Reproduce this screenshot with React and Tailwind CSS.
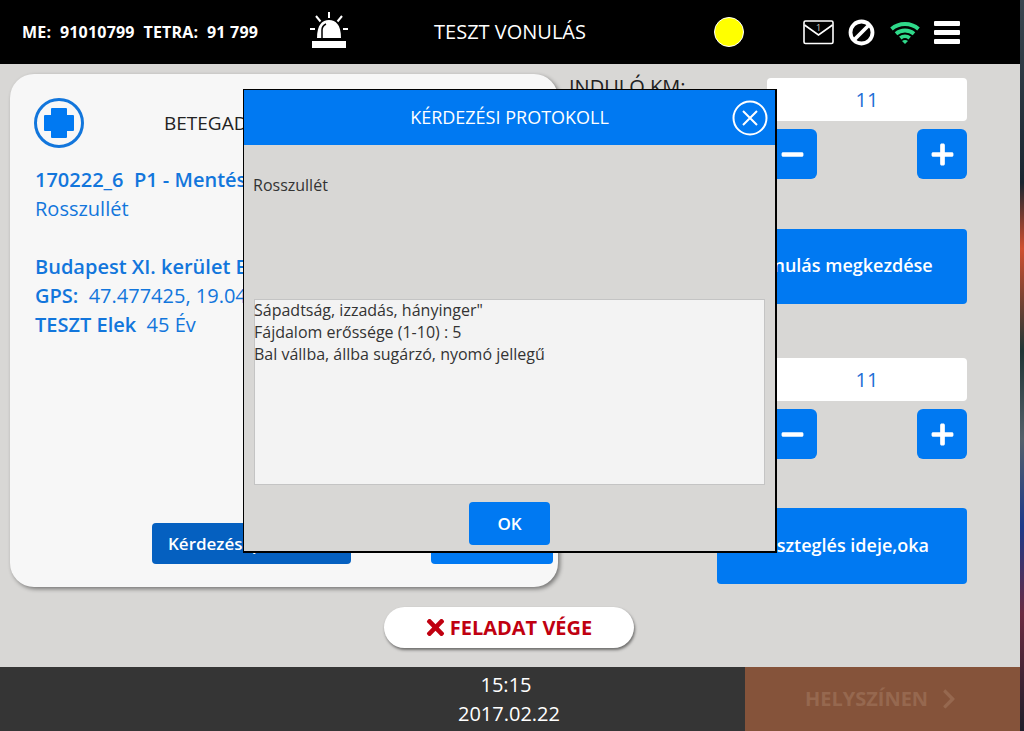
import React from 'react';
import { FaTimes, FaChevronRight, FaPlus, FaMinus } from 'react-icons/fa';

// Alarm beacon in the top bar
const Beacon = () => (
  <svg width="40" height="38" viewBox="0 0 40 38" fill="none">
    <g stroke="#fff" strokeWidth="2">
      <path d="M20 0v6M7 4l4.500 5.500M33 4l-4.500 5.500M1 17h5M34 17h5" />
    </g>
    <path d="M8 26c0-13 5-18 12-18s12 5 12 18z" fill="#fff" />
    <path d="M13 26v-8c0-3 2-5 4-6" stroke="#000" strokeWidth="1.500" />
    <rect x="3" y="29" width="34" height="7" fill="#fff" />
  </svg>
);

const Envelope = () => (
  <svg width="31" height="25" viewBox="0 0 31 25" fill="none" stroke="#fff">
    <rect x="1" y="1" width="29" height="22.500" rx="1.500" strokeWidth="1.600" />
    <path d="M1.500 5l14 10 14-10" strokeWidth="1.600" />
    <text x="15.500" y="11" fontSize="9" fill="#ccc" stroke="none" textAnchor="middle" fontFamily="Open Sans">1</text>
  </svg>
);

const Ban = () => (
  <svg width="27" height="27" viewBox="0 0 27 27" fill="none" stroke="#fff" strokeWidth="3.800">
    <circle cx="13.500" cy="13.500" r="11" />
    <path d="M21 6L6 21" />
  </svg>
);

const Wifi = () => (
  <svg width="30" height="23" viewBox="0 0 30 23" fill="none" stroke="#2fd98a" strokeWidth="3.800">
    <path d="M1.500 8C9 1.300 21 1.300 28.500 8" />
    <path d="M6 12.800c5-4.400 13-4.400 18 0" />
    <path d="M10.300 17c2.700-2.300 6.700-2.300 9.400 0" />
    <path d="M15 23l-3-3c1.800-1.200 4.200-1.200 6 0z" fill="#2fd98a" stroke="none" />
  </svg>
);

const Stepper = ({ value }) => (
  <div className="flex flex-col items-end">
    <div className="w-[200px] h-[43px] bg-white rounded flex items-center justify-center text-[20px] text-[#1f6fd6] font-medium">{value}</div>
    <div className="w-[200px] flex justify-between mt-2">
      <button className="w-[50px] h-[50px] bg-[#0079f2] rounded-md flex items-center justify-center text-white"><FaMinus size={25} /></button>
      <button className="w-[50px] h-[50px] bg-[#0079f2] rounded-md flex items-center justify-center text-white"><FaPlus size={25} /></button>
    </div>
  </div>
);

export default function App() {
  return (
    <div className="relative w-[1024px] h-[731px] overflow-hidden flex bg-[#22272b] font-['Open_Sans',sans-serif]">
      <div className="w-[1020px] h-full flex flex-col">
        {/* Top bar */}
        <header className="h-16 bg-black text-white flex items-center shrink-0">
          <div className="w-[290px] pl-[22px] text-[16px] font-bold whitespace-pre tracking-[0.2px]">ME:  91010799  TETRA:  91 799</div>
          <div className="mt-[-2px] ml-[19px]"><Beacon /></div>
          <div className="ml-[85px] text-[20px] w-[152px] text-center whitespace-nowrap">TESZT VONULÁS</div>
          <div className="ml-[128px] w-[30px] h-[30px] rounded-full bg-[#ffff00] border border-white"></div>
          <div className="ml-[59px] flex items-center">
            <Envelope />
            <div className="ml-[14px]"><Ban /></div>
            <div className="ml-[15px]"><Wifi /></div>
            <div className="ml-[14px] flex flex-col gap-[4px]">
              <span className="block w-[26px] h-[5px] bg-white rounded-[1px]"></span>
              <span className="block w-[26px] h-[5px] bg-white rounded-[1px]"></span>
              <span className="block w-[26px] h-[5px] bg-white rounded-[1px]"></span>
            </div>
          </div>
        </header>

        {/* Main */}
        <main className="flex-1 bg-[#d8d7d5] relative">
          <div className="flex pt-[10px] pl-[10px]">
            <section className="w-[548px] h-[513px] bg-[#f7f7f7] rounded-[24px] shadow-[2px_2px_4px_rgba(0,0,0,0.45)] px-[25px] pt-[24px] relative">
              <div className="flex items-center">
                <svg className="ml-[-1px]" width="50" height="50" viewBox="0 0 50 50" fill="none">
                  <circle cx="25" cy="25" r="23.500" stroke="#1276dc" strokeWidth="3" />
                  <path d="M18 11h14v7h7v14h-7v7H18v-7h-7V18h7z" fill="#0079f2" stroke="#0079f2" strokeLinejoin="round" strokeWidth="2" />
                </svg>
                <div className="ml-[80px] text-[19px] text-[#222] whitespace-nowrap">BETEGADATOK</div>
              </div>
              <div className="mt-[17px] text-[20px] leading-[29px] text-[#1276dc] whitespace-pre">
                <div className="font-semibold">170222_6  P1 - Mentés</div>
                <div>Rosszullét</div>
                <div className="mt-[29px] font-semibold">Budapest XI. kerület Etele út</div>
                <div><span className="font-semibold">GPS:</span>  47.477425, 19.04</div>
                <div><span className="font-semibold">TESZT Elek</span>  45 Év</div>
              </div>
              <div className="absolute left-[142px] right-[5px] bottom-[23px] flex justify-between">
                <button className="w-[199px] h-[41px] bg-[#0560c0] rounded text-white text-[17px] font-semibold text-left pl-4">Kérdezési protokoll</button>
                <button className="w-[122px] h-[41px] bg-[#0079f2] rounded"></button>
              </div>
            </section>

            <section className="ml-[11px] w-[398px] flex flex-col">
              <div className="h-[43px] relative">
                <span className="text-[20px] text-[#222] whitespace-nowrap leading-[26px] absolute top-0 left-0">INDULÓ KM:</span>
              </div>
              <div className="mt-[-39px]"><Stepper value="11" /></div>
              <button className="ml-auto mt-[50px] w-[250px] h-[75px] pb-[2px] bg-[#0079f2] rounded text-white text-[18px] font-semibold">Vonulás megkezdése</button>
              <div className="mt-[54px]"><Stepper value="11" /></div>
              <button className="ml-auto mt-[49px] w-[250px] h-[76px] pb-[2px] bg-[#0079f2] rounded text-white text-[18px] font-semibold">Veszteglés ideje,oka</button>
            </section>
          </div>

          <div className="flex justify-center mt-[20px]">
            <button className="ml-[-2px] w-[250px] h-[41px] bg-white rounded-full shadow-[1px_2px_3px_rgba(0,0,0,0.5)] flex items-center justify-center gap-[2px] pr-[3px] text-[#c00010] text-[20px] font-bold">
              <FaTimes size={25} /> FELADAT VÉGE
            </button>
          </div>
        </main>

        {/* Bottom bar */}
        <footer className="h-16 bg-[#353535] flex shrink-0">
          <div className="w-[745px] pl-[273px] text-white text-[20px] leading-[29px] pt-[3px]">
            <div className="w-[466px] text-center">15:15</div>
            <div className="w-[472px] text-center">2017.02.22</div>
          </div>
          <div className="flex-1 bg-[#85533a] flex items-center justify-center gap-[10px] text-[#96684f] text-[20px] font-bold">
            HELYSZÍNEN <FaChevronRight size={22} />
          </div>
        </footer>
      </div>
      <div className="flex-1 bg-[linear-gradient(to_bottom,#3a4650_0%,#1a2530_25%,#d05030_34%,#1f3535_48%,#55606a_60%,#1d3a8a_72%,#6a2a40_84%,#1e1e2a_100%)]"></div>

      {/* Protocol dialog */}
      <div className="absolute left-[243px] top-[89px] w-[534px] h-[464px] bg-[#d8d7d5] border border-black border-r-2 border-b-2 flex flex-col">
        <div className="h-[55px] bg-[#0079f2] flex items-center justify-center text-white text-[18px] relative shrink-0">
          KÉRDEZÉSI PROTOKOLL
          <svg className="absolute right-[7px] top-[10px]" width="36" height="36" viewBox="0 0 36 36" fill="none" stroke="#fff" strokeWidth="2">
            <circle cx="18" cy="18" r="16.500" />
            <path d="M11 11l14 14M25 11L11 25" />
          </svg>
        </div>
        <div className="pl-[9px] pt-[30px] text-[16px] leading-[20px] text-[#333]">Rosszullét</div>
        <div className="mx-[10px] mt-[104px] h-[186px] bg-[#f3f3f3] border border-[#c4c4c4] text-[16px] leading-[22px] text-[#333] whitespace-pre">
          <div className="mt-[-1px] ml-[-1px]">{'Sápadtság, izzadás, hányinger"\nFájdalom erőssége (1-10) : 5\nBal vállba, állba sugárzó, nyomó jellegű'}</div>
        </div>
        <div className="flex justify-center mt-[17px]">
          <button className="w-[81px] h-[43px] bg-[#0079f2] rounded text-white text-[17px] font-semibold">OK</button>
        </div>
      </div>
    </div>
  );
}
